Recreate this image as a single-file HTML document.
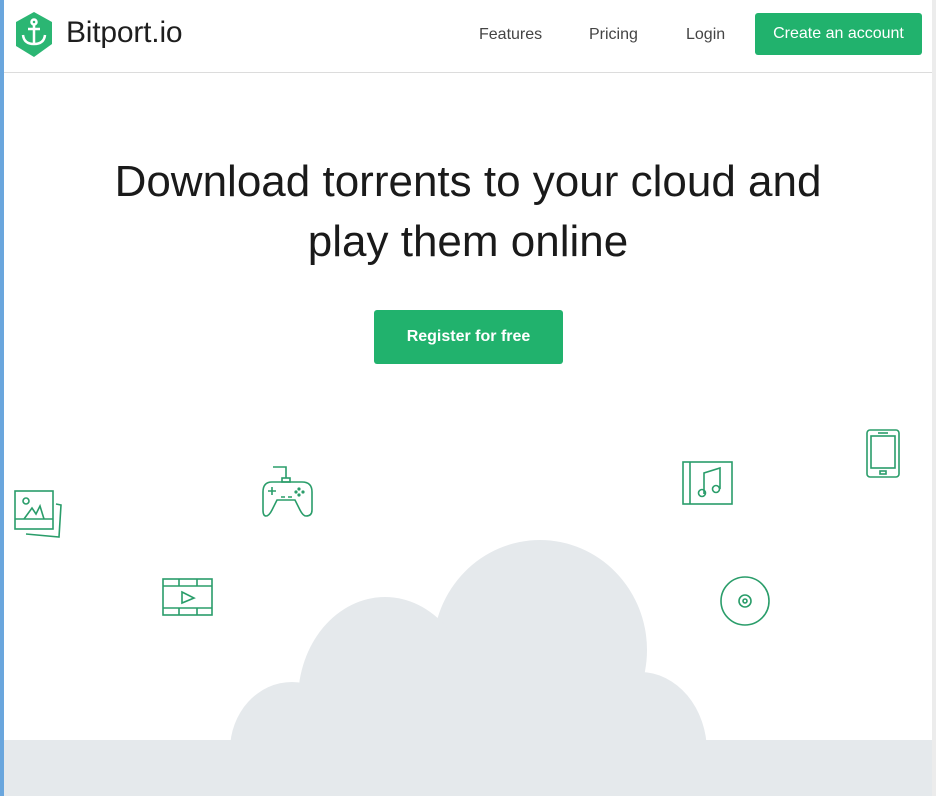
<!DOCTYPE html>
<html><head><style>
*{margin:0;padding:0;box-sizing:border-box}
body{width:936px;height:796px;overflow:hidden;background:#fff;font-family:"Liberation Sans",sans-serif;position:relative}
.lb{position:absolute;left:0;top:0;width:4px;height:796px;background:#6aa6dd}
.rb{position:absolute;right:0;top:0;width:4px;height:796px;background:#ececec}
.hdr{position:absolute;left:4px;top:0;width:928px;height:73px;border-bottom:1px solid #dcdcdc}
.logo{position:absolute;left:66px;top:16px;font-size:30px;color:#1e1e1e;letter-spacing:-0.2px}
.nav{position:absolute;top:26px;font-size:16px;color:#444}
.cta{position:absolute;left:755px;top:13px;width:167px;height:42px;background:#21b26d;border-radius:3px;color:#fff;font-size:16px;text-align:center;line-height:42px}
h1{position:absolute;left:0;width:936px;top:152px;text-align:center;font-weight:normal;font-size:44px;line-height:60px;color:#1a1a1a}
.reg{position:absolute;left:374px;top:310px;width:189px;height:54px;background:#21b26d;border-radius:3px;color:#fff;font-size:16px;font-weight:bold;text-align:center;line-height:54px}
.band{position:absolute;left:4px;top:740px;width:928px;height:56px;background:#e5e9ec}
svg{position:absolute;left:0;top:0}
</style></head><body>
<div class="lb"></div><div class="rb"></div>
<div class="hdr"></div>
<svg width="60" height="60" viewBox="0 0 60 60" style="left:14px;top:11px">
<polygon points="20,1 38,11 38,33 20,46 2,35 2,11" fill="#2bb673"/>
<g stroke="#fff" stroke-width="2.5" fill="none"><circle cx="20" cy="11" r="2.5"/><line x1="20" y1="14" x2="20" y2="33"/><line x1="14" y1="18" x2="26" y2="18"/><path d="M9 24 Q10 33 20 33 Q30 33 31 24"/></g>
</svg>
<div class="logo">Bitport.io</div>
<div class="nav" style="left:479px">Features</div>
<div class="nav" style="left:589px">Pricing</div>
<div class="nav" style="left:686px">Login</div>
<div class="cta">Create an account</div>
<h1>Download torrents to your cloud and<br>play them online</h1>
<div class="reg">Register for free</div>
<svg width="936" height="796">
<g fill="#e5e9ec">
<ellipse cx="540" cy="650" rx="107" ry="110"/>
<ellipse cx="385" cy="700" rx="87" ry="103"/>
<ellipse cx="292" cy="750" rx="62" ry="68"/>
<ellipse cx="640" cy="752" rx="67" ry="80"/>
<rect x="290" y="690" width="360" height="60"/>
</g>
<g fill="none" stroke="#2a9d6a" stroke-width="1.6">
<rect x="15" y="491" width="38" height="38"/><line x1="15" y1="519" x2="53" y2="519"/>
<circle cx="26" cy="501" r="3"/><path d="M24 519 L32 508 L36 514 L40 506 L44 519"/>
<path d="M56 504 L61 505 L59 537 L26 534"/>
<path d="M273 467 H286 V478"/><rect x="282" y="478" width="8" height="4"/>
<path d="M272 482 H302 Q312 482 312 492 V510 Q312 516 306 516 Q303 516 300 510 L295 500 H277 L272 510 Q269 516 266 516 Q263 516 263 510 V492 Q263 482 272 482Z"/>
<path d="M268 491 H276 M272 487 V495 M281 497 H285 M288 497 H292"/>
<circle cx="299" cy="489" r=".8"/><circle cx="303" cy="492" r=".8"/><circle cx="299" cy="495" r=".8"/><circle cx="296" cy="492" r=".8"/>
<rect x="163" y="579" width="49" height="36"/><line x1="163" y1="586" x2="212" y2="586"/><line x1="163" y1="608" x2="212" y2="608"/>
<path d="M179 579 V586 M197 579 V586 M179 608 V615 M197 608 V615"/><path d="M182 592 L194 598 L182 603Z"/>
<rect x="683" y="462" width="49" height="42"/><line x1="690" y1="462" x2="690" y2="504"/>
<path d="M704 494 V473 L720 468 V489"/><circle cx="702" cy="493" r="3.5"/><circle cx="716" cy="489" r="3.5"/>
<rect x="867" y="430" width="32" height="47" rx="3"/><rect x="871" y="436" width="24" height="32"/><line x1="878" y1="433" x2="888" y2="433"/><rect x="880" y="471" width="6" height="3"/>
<circle cx="745" cy="601" r="24"/><circle cx="745" cy="601" r="6"/><circle cx="745" cy="601" r="2"/>
</g>
</svg>
<div class="band"></div>
</body></html>
